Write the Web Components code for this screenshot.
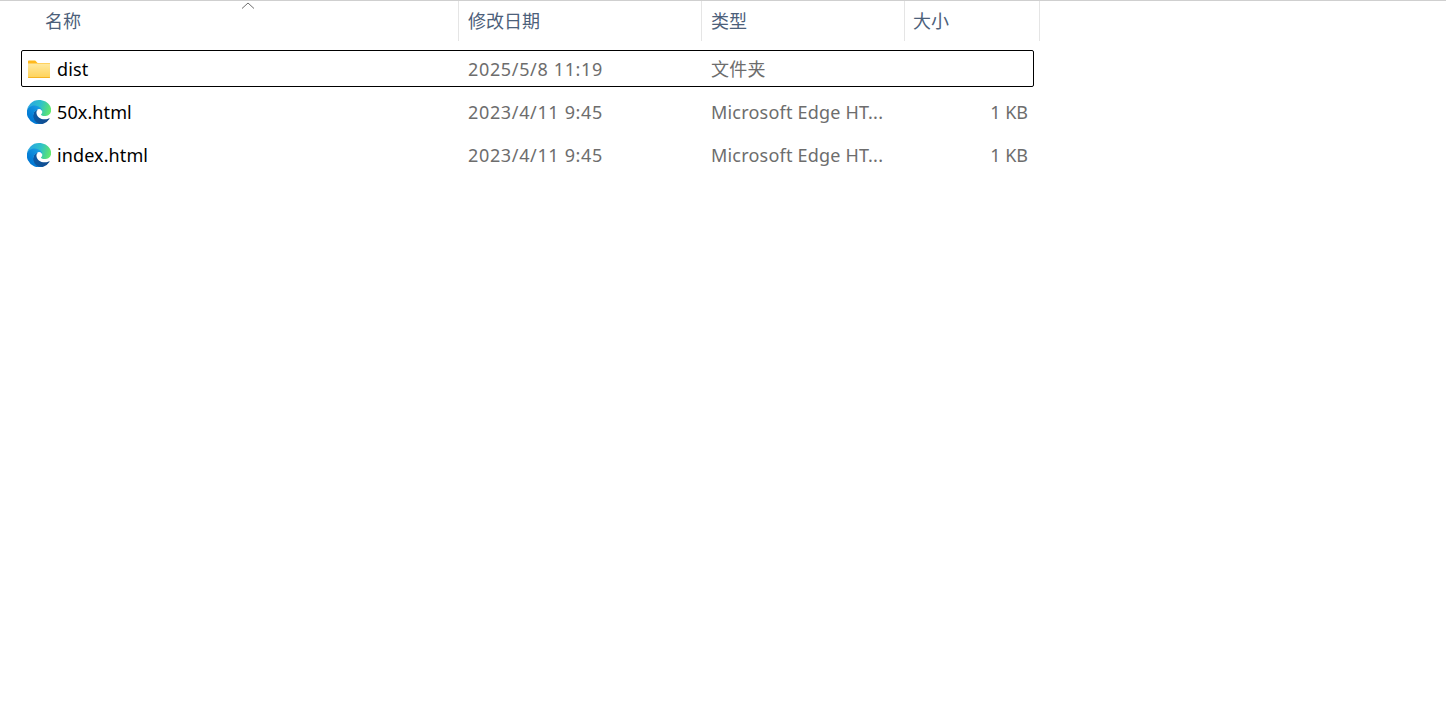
<!DOCTYPE html>
<html lang="zh-CN">
<head>
<meta charset="utf-8">
<title>dist</title>
<style>
  html, body { margin: 0; height: 100%; background: #fff; }
  body { font: 18px/24px "Noto Sans", "Noto Sans CJK SC", sans-serif; }
</style>
</head>
<body>
<file-list>
  <list-header>
    <header-cell width="459" pad="45" sorted>名称</header-cell>
    <header-cell width="243" pad="9">修改日期</header-cell>
    <header-cell width="203" pad="9">类型</header-cell>
    <header-cell width="135" pad="8">大小</header-cell>
  </list-header>
  <file-row icon="folder" name="dist" date="2025/5/8 11:19" type="文件夹" selected></file-row>
  <file-row icon="edge" name="50x.html" date="2023/4/11 9:45" type="Microsoft Edge HT..." size="1 KB"></file-row>
  <file-row icon="edge" name="index.html" date="2023/4/11 9:45" type="Microsoft Edge HT..." size="1 KB"></file-row>
</file-list>

<script>
(() => {
  class FileList extends HTMLElement {
    connectedCallback() {
      if (this.shadowRoot) return;
      const root = this.attachShadow({ mode: 'open' });
      root.innerHTML = `
        <style>
          :host { display: flex; flex-direction: column; gap: 6px; border-top: 1px solid #cfcfcf; }
        </style>
        <slot></slot>
      `;
    }
  }

  class ListHeader extends HTMLElement {
    connectedCallback() {
      if (this.shadowRoot) return;
      const root = this.attachShadow({ mode: 'open' });
      root.innerHTML = `
        <style>
          :host { display: flex; height: 40px; margin-bottom: 3px; }
        </style>
        <slot></slot>
      `;
    }
  }

  class HeaderCell extends HTMLElement {
    connectedCallback() {
      if (this.shadowRoot) return;
      const root = this.attachShadow({ mode: 'open' });
      const width = this.getAttribute('width');
      const pad = this.getAttribute('pad');
      const caret = this.hasAttribute('sorted')
        ? `<svg class="caret" width="14" height="7" viewBox="0 0 14 7"><path d="M1 6.5 7 1l6 5.5" fill="none" stroke="#6f6f6f" stroke-width="1"/></svg>`
        : '';
      root.innerHTML = `
        <style>
          :host {
            display: flex; align-items: center; position: relative; box-sizing: border-box;
            width: ${width}px; padding-left: ${pad}px; padding-bottom: 2px;
            border-right: 1px solid #e5e5e5; color: #4c607a;
            font: 18px/24px "Noto Sans CJK SC", "Noto Sans", sans-serif;
          }
          .caret { position: absolute; left: 241px; top: 1px; }
        </style>
        ${caret}<slot></slot>
      `;
    }
  }

  let edgeCount = 0;
  const edgeIcon = () => {
    const id = 'e' + (++edgeCount);
    return `<svg width="24" height="24" viewBox="0 0 256 256">
      <defs>
        <linearGradient id="${id}a" x1="63.33" y1="180" x2="241.62" y2="180" gradientUnits="userSpaceOnUse">
          <stop offset="0" stop-color="#0c59a4"/><stop offset="1" stop-color="#114a8b"/>
        </linearGradient>
        <linearGradient id="${id}b" x1="152.8" y1="99.7" x2="41.5" y2="221" gradientUnits="userSpaceOnUse">
          <stop offset="0" stop-color="#1b9de2"/><stop offset="0.16" stop-color="#1595df"/><stop offset="0.67" stop-color="#0680d7"/><stop offset="1" stop-color="#0078d4"/>
        </linearGradient>
        <linearGradient id="${id}c" x1="20" y1="60" x2="250" y2="130" gradientUnits="userSpaceOnUse">
          <stop offset="0" stop-color="#2aa8e0"/><stop offset="0.5" stop-color="#2fc2c9"/><stop offset="0.8" stop-color="#4fd98a"/><stop offset="1" stop-color="#66eb6e"/>
        </linearGradient>
      </defs>
      <path fill="url(#${id}a)" d="M235.68 195.46a93.73 93.73 0 0 1-10.54 4.71 101.87 101.87 0 0 1-35.9 6.46c-47.32 0-88.54-32.55-88.54-74.32A31.48 31.48 0 0 1 117.13 105c-42.8 1.8-53.8 46.4-53.8 72.53 0 73.88 68.09 81.37 82.76 81.37 7.91 0 19.84-2.3 27-4.56l1.31-.44a128.34 128.34 0 0 0 66.6-52.8 4 4 0 0 0-5.32-5.64z"/>
      <path fill="url(#${id}b)" d="M105.73 241.42A79.2 79.2 0 0 1 83 220.1a80.71 80.71 0 0 1 29.53-120c3.2-1.51 8.67-4.24 15.95-4.11a33.19 33.19 0 0 1 26.35 13.34 32.69 32.69 0 0 1 6.5 19.14c0-.21 25.08-81.61-82-81.61-45 0-82 42.7-82 80.17a133.42 133.42 0 0 0 12.41 57.4 128.34 128.34 0 0 0 156.78 67.28 75.72 75.72 0 0 1-61.14-10.03z"/>
      <path fill="url(#${id}c)" d="M152.31 148.86c-.83 1.07-3.38 2.56-3.38 5.79 0 2.67 1.74 5.24 4.83 7.4 14.71 10.23 42.44 8.88 42.51 8.88a60.92 60.92 0 0 0 31-8.55A62.8 62.8 0 0 0 258 109.8c.27-22.92-8.18-38.16-11.6-44.91C224.72 22.5 177.93 0 127.05 0A128 128 0 0 0-.94 126.2c.49-37.36 37.62-67.53 81.78-67.53 3.58 0 24 .35 43 10.31 16.71 8.77 25.46 19.36 31.54 29.85 6.32 10.9 7.44 24.67 7.44 30.16s-2.8 13.64-8.52 19.87z"/>
    </svg>`;
  };

  const folderIcon = () => `<svg width="24" height="24" viewBox="0 0 24 24">
      <defs>
        <linearGradient id="fold" x1="0" y1="0" x2="0" y2="1">
          <stop offset="0" stop-color="#ffe9a0"/><stop offset="1" stop-color="#ffd257"/>
        </linearGradient>
      </defs>
      <path fill="#ffb91d" d="M1 4.6C1 4 1.4 3.5 2 3.5h6.2L10.6 6H23v15H1z"/>
      <path fill="url(#fold)" d="M1 6.6h22V20c0 .6-.4 1-1 1H2c-.6 0-1-.4-1-1z"/>
      <path fill="#f5b324" d="M1 20h22v.2c0 .5-.4.8-.9.8H1.9c-.5 0-.9-.3-.9-.8z"/>
    </svg>`;

  class FileRow extends HTMLElement {
    connectedCallback() {
      if (this.shadowRoot) return;
      const root = this.attachShadow({ mode: 'open' });
      const attr = (k) => this.getAttribute(k) || '';
      const icon = attr('icon') === 'folder' ? folderIcon() : edgeIcon();
      const border = this.hasAttribute('selected') ? '#000' : 'transparent';
      root.innerHTML = `
        <style>
          :host {
            display: grid; grid-template-columns: 24px 417px 243px 202px 1fr;
            align-items: center; box-sizing: border-box;
            width: 1013px; height: 37px; margin-left: 21px; padding: 0 5px;
            border: 1px solid ${border}; border-radius: 2px; color: #6d6d6d;
          }
          svg { display: block; }
          .name { color: #000; padding-left: 6px; letter-spacing: .1px; }
          .size { text-align: right; }
          .date, .type { white-space: nowrap; }
          .date { letter-spacing: .65px; }
          .type { letter-spacing: .2px; }
        </style>
        ${icon}
        <span class="name">${attr('name')}</span>
        <span class="date">${attr('date')}</span>
        <span class="type">${attr('type')}</span>
        <span class="size">${attr('size')}</span>
      `;
    }
  }

  customElements.define('file-list', FileList);
  customElements.define('list-header', ListHeader);
  customElements.define('header-cell', HeaderCell);
  customElements.define('file-row', FileRow);
})();
</script>
</body>
</html>
